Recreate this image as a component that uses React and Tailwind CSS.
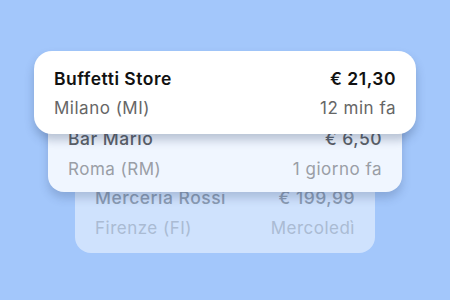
import React from 'react'

const cards = [
    { title: 'Buffetti Store', price: '€ 21,30', place: 'Milano (MI)', time: '12 min fa' },
    { title: 'Bar Mario', price: '€ 6,50', place: 'Roma (RM)', time: '1 giorno fa' },
    { title: 'Merceria Rossi', price: '€ 199,99', place: 'Firenze (FI)', time: 'Mercoledì' },
]

const App = () => {
    return (
        <div className='w-[450px] h-[300px] bg-[#a3c7fb] overflow-hidden flex flex-col items-center pt-[51px]' style={{ fontFamily: 'Inter, "Noto Sans", sans-serif' }}>
            <div className='relative z-30 w-[382px] h-[83px] bg-white rounded-[18px] shadow-[0_6px_10px_rgba(40,60,100,0.28)] px-5 pt-[17px] tracking-[0.5px]'>
                <div className='flex justify-between text-[17.5px] font-semibold text-[#111] leading-[22px]'>
                    <span>{cards[0].title}</span>
                    <span>{cards[0].price}</span>
                </div>
                <div className='flex justify-between text-[17px] text-[#666] leading-[22px] mt-[7px]'>
                    <span>{cards[0].place}</span>
                    <span>{cards[0].time}</span>
                </div>
            </div>
            <div className='relative z-20 -mt-[25px] w-[354px] h-[83px] bg-[#f0f6ff] rounded-[16px] shadow-[0_6px_10px_rgba(40,60,100,0.22)] px-5 pt-[19px] tracking-[0.5px]'>
                <div className='flex justify-between text-[17.5px] font-medium text-[#5b5f66] leading-[22px]'>
                    <span>{cards[1].title}</span>
                    <span>{cards[1].price}</span>
                </div>
                <div className='flex justify-between text-[17px] text-[#9a9ea6] leading-[22px] mt-[8px]'>
                    <span>{cards[1].place}</span>
                    <span>{cards[1].time}</span>
                </div>
            </div>
            <div className='relative z-10 -mt-[22px] w-[300px] h-[83px] bg-[#cfe2fd] rounded-[16px] px-5 pt-[17px] tracking-[0.5px]'>
                <div className='flex justify-between text-[17.5px] font-medium text-[#8a9bb3] leading-[22px]'>
                    <span>{cards[2].title}</span>
                    <span>{cards[2].price}</span>
                </div>
                <div className='flex justify-between text-[17px] text-[#aabbd3] leading-[22px] mt-[8px]'>
                    <span>{cards[2].place}</span>
                    <span>{cards[2].time}</span>
                </div>
            </div>
        </div>
    )
}

export default App
